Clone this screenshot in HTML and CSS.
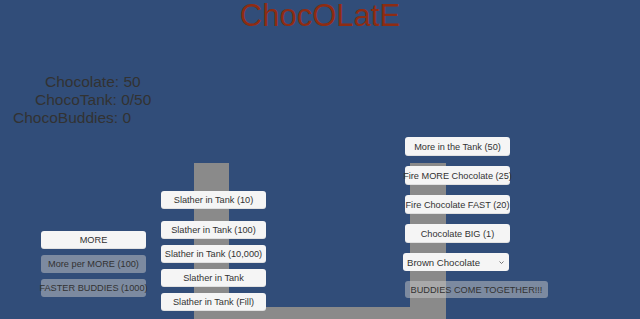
FILE: index.html
```html
<!DOCTYPE html>
<html lang="en">
<head>
    <meta charset="UTF-8">
    <meta name="viewport" content="width=device-width, initial-scale=1.0">
    <title>ChocOLatE</title>
    <link rel="stylesheet" href="styles.css">
</head>
<body>
    <svg class="tank" width="640" height="319" viewBox="0 0 640 319">
        <path d="M194 163 H229 V307 H410 V163 H446 V319 H194 Z" fill="#8a8a8a"/>
    </svg>

    <h1 class="title">ChocOLatE</h1>

    <div class="stats">
        <div class="stat stat-chocolate">Chocolate: 50</div>
        <div class="stat stat-tank">ChocoTank: 0/50</div>
        <div class="stat stat-buddies">ChocoBuddies: 0</div>
    </div>

    <div class="panel panel-left">
        <button class="btn">MORE</button>
        <button class="btn btn-disabled">More per MORE (100)</button>
        <button class="btn btn-disabled">FASTER BUDDIES (1000)</button>
    </div>

    <div class="panel panel-middle">
        <button class="btn btn-first">Slather in Tank (10)</button>
        <button class="btn">Slather in Tank (100)</button>
        <button class="btn">Slather in Tank (10,000)</button>
        <button class="btn">Slather in Tank</button>
        <button class="btn">Slather in Tank (Fill)</button>
    </div>

    <div class="panel panel-right">
        <button class="btn btn-tall">More in the Tank (50)</button>
        <button class="btn btn-tall">Fire MORE Chocolate (25)</button>
        <button class="btn btn-tall">Fire Chocolate FAST (20)</button>
        <button class="btn btn-tall">Chocolate BIG (1)</button>
        <div class="dropdown">
            <span>Brown Chocolate</span>
            <svg class="chevron" width="5" height="3" viewBox="0 0 5 3">
                <path d="M0.5 0.5 L2.5 2.5 L4.5 0.5" fill="none" stroke="#555" stroke-width="0.8"/>
            </svg>
        </div>
        <button class="btn btn-disabled btn-wide">BUDDIES COME TOGETHER!!!</button>
    </div>
</body>
</html>
```

FILE: styles.css
```css
body {
    margin: 0;
    width: 640px;
    height: 319px;
    overflow: hidden;
    position: relative;
    background-color: #314d79;
    font-family: "Liberation Sans", Arial, sans-serif;
    color: #323232;
}
.tank {
    position: absolute;
    left: 0;
    top: 0;
}
.title {
    position: relative;
    margin: 0;
    font-size: 31px;
    line-height: 31px;
    font-weight: normal;
    text-align: center;
    color: #8e2c12;
}
.stats {
    position: absolute;
    left: 0;
    top: 73px;
}
.stat {
    font-size: 15.5px;
    line-height: 18px;
    white-space: nowrap;
}
.stat-chocolate {
    margin-left: 45px;
}
.stat-tank {
    margin-left: 35px;
}
.stat-buddies {
    margin-left: 13px;
}
.panel {
    position: absolute;
    display: flex;
    flex-direction: column;
    align-items: flex-start;
}
.panel-left {
    left: 41px;
    top: 231px;
    gap: 6px;
}
.panel-middle {
    left: 161px;
    top: 191px;
    gap: 6px;
}
.panel-right {
    left: 405px;
    top: 137px;
    gap: 10px;
}
.btn {
    display: flex;
    align-items: center;
    justify-content: center;
    width: 105px;
    height: 18px;
    padding: 0;
    border: none;
    border-radius: 3px;
    background-color: #f5f5f5;
    box-shadow: inset 0 -1px 0 rgba(0, 0, 0, 0.08);
    font-family: inherit;
    font-size: 9.2px;
    color: #323232;
    white-space: nowrap;
}
.btn-tall {
    height: 19px;
}
.btn-first {
    margin-bottom: 6px;
}
.btn-disabled {
    background-color: rgba(200, 200, 200, 0.5);
    box-shadow: none;
}
.btn-wide {
    width: 143px;
    height: 17px;
}
.dropdown {
    display: flex;
    align-items: center;
    justify-content: space-between;
    box-sizing: border-box;
    width: 106px;
    height: 18px;
    padding: 0 5px 0 4px;
    margin-left: -2px;
    border-radius: 3px;
    background-color: #f5f5f5;
    font-size: 9.6px;
    white-space: nowrap;
}
```
